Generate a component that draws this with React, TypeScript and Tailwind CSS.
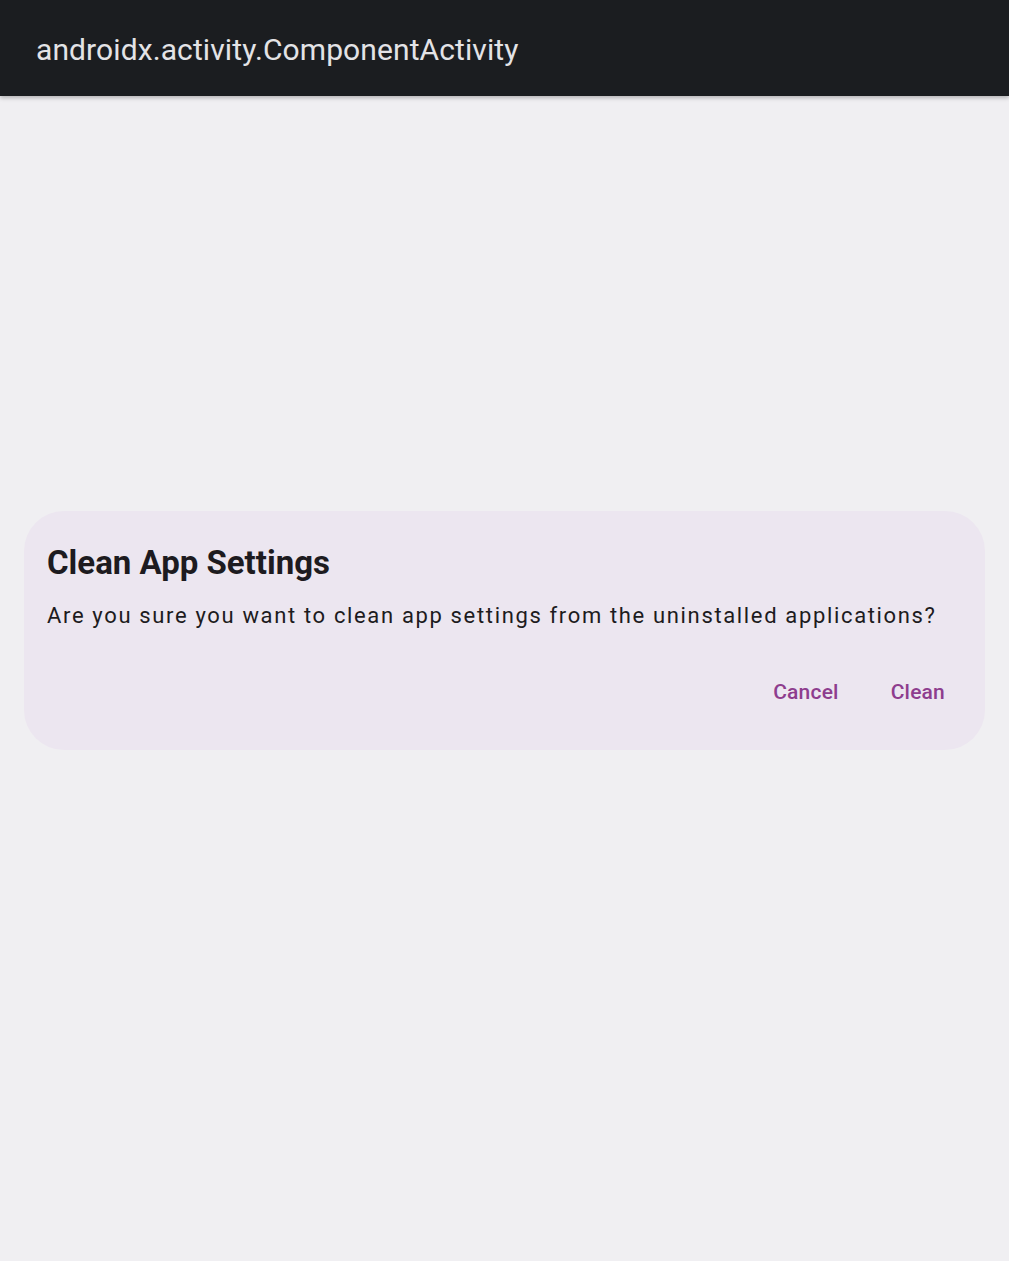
import React from 'react';

export default function App() {
  return (
    <div
      className="flex h-[1261px] w-full flex-col bg-[#f0eff2]"
      style={{ fontFamily: 'Roboto, "Noto Sans", sans-serif' }}
    >
      <header className="relative z-10 flex h-[96px] shrink-0 items-center bg-[#1b1d20] px-[36px] pt-[4px] shadow-[0_2px_4px_rgba(0,0,0,0.25)]">
        <h1 className="text-[30px] font-normal leading-none tracking-[0.1px] text-[#e3e3e6]">
          androidx.activity.ComponentActivity
        </h1>
      </header>

      <main className="flex flex-1 flex-col px-[24px] pt-[415px]">
        <div className="flex h-[239px] flex-col rounded-[40px] bg-[#ece6f0] px-[23px] pt-[30px]">
          <h2 className="text-[33px] font-bold leading-[44px] text-[#1d1b20]">
            Clean App Settings
          </h2>
          <p className="mt-[16px] text-[22px] leading-[30px] tracking-[1.65px] text-[#1d1b20]">
            Are you sure you want to clean app settings from the uninstalled applications?
          </p>
          <div className="mt-[46px] flex justify-end gap-[52px] pr-[17px]">
            <button className="text-[21px] font-medium leading-[30px] tracking-[0.2px] text-[#8e3d8e]">
              Cancel
            </button>
            <button className="text-[21px] font-medium leading-[30px] tracking-[0.2px] text-[#8e3d8e]">
              Clean
            </button>
          </div>
        </div>
      </main>
    </div>
  );
}
